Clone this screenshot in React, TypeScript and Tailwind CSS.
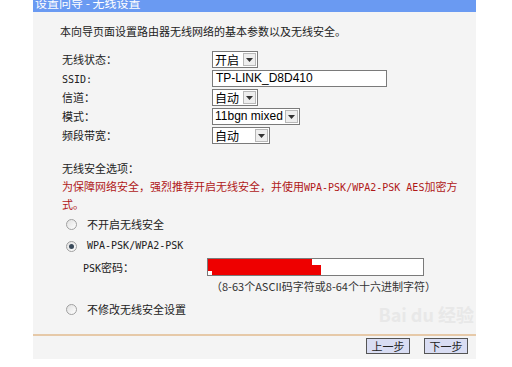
import React from "react";

const font = { fontFamily: '"Noto Sans CJK SC", "DejaVu Sans", sans-serif' };
const mono = { fontFamily: '"DejaVu Sans Mono", "Liberation Mono", monospace' };
const arial = { fontFamily: '"Liberation Sans", Arial, sans-serif' };

const Select = ({ value, width }: { value: string; width: string }) => (
  <div className={`flex h-[17px] items-stretch border border-[#7a7a7a] bg-white ${width}`}>
    <span
      className="min-w-0 flex-1 overflow-hidden whitespace-nowrap px-[2px] text-[12px] leading-[15px] text-black"
      style={/^[0-9a-z ]+$/i.test(value) ? arial : undefined}
    >
      {value}
    </span>
    <span className="m-[1px] flex w-[13px] shrink-0 items-center justify-center border border-[#b8b8b8] bg-[#eeeeee]">
      <svg width="7" height="4" viewBox="0 0 7 4">
        <path d="M0 0h7L3.5 4z" fill="#333" />
      </svg>
    </span>
  </div>
);

const Radio = ({ checked }: { checked?: boolean }) => (
  <span className="flex h-[11px] w-[11px] items-center justify-center rounded-full border border-[#a0a0a0] bg-gradient-to-br from-[#e0e0e0] to-[#ffffff]">
    {checked && <span className="h-[5px] w-[5px] rounded-full bg-[#3a4a5a]" />}
  </span>
);

const Row = ({ label, children }: { label: React.ReactNode; children: React.ReactNode }) => (
  <div className="flex h-[19px] items-center">
    <span className="w-[150px] text-[11px] text-[#222]">{label}</span>
    {children}
  </div>
);

export default function App() {
  return (
    <div className="h-[367px] w-[512px] overflow-hidden bg-white" style={font}>
      <div className="relative ml-[33px] flex h-[359px] w-[443px] flex-col bg-[#f4f4f4]">
        <div className="h-[12px] overflow-hidden bg-[#6a9af2]">
          <div className="-mt-[5px] pl-[2px] text-[12px] leading-[16px] text-white">设置向导 - 无线设置</div>
        </div>
        <div className="pl-[27px] pt-[11px] text-[11px] leading-[16px] text-[#222]">
          本向导页面设置路由器无线网络的基本参数以及无线安全。
        </div>
        <div className="flex flex-col pl-[29px] pt-[11px]">
          <Row label="无线状态：">
            <Select value="开启" width="w-[46px]" />
          </Row>
          <Row label={<span className="text-[10px]" style={mono}>SSID:</span>}>
            <div
              className="h-[17px] w-[175px] border border-[#7a7a7a] bg-white px-[3px] text-[12px] leading-[15px] text-black"
              style={arial}
            >
              TP-LINK_D8D410
            </div>
          </Row>
          <Row label="信道：">
            <Select value="自动" width="w-[46px]" />
          </Row>
          <Row label="模式：">
            <Select value="11bgn mixed" width="w-[88px]" />
          </Row>
          <Row label="频段带宽：">
            <Select value="自动" width="w-[58px]" />
          </Row>
        </div>
        <div className="pl-[29px] pt-[14px] text-[11px] leading-[18px] text-[#222]">无线安全选项：</div>
        <div className="whitespace-nowrap pl-[29px] text-[11px] leading-[18px] text-[#b01818]">
          为保障网络安全，强烈推荐开启无线安全，并使用
          <span className="text-[10px] leading-none" style={mono}>
            WPA-PSK/WPA2-PSK AES
          </span>
          加密方
          <br />
          式。
        </div>
        <div className="flex items-center gap-[10px] pl-[33px] pt-[1px] text-[11px] leading-[20px] text-[#222]">
          <Radio />
          <span>不开启无线安全</span>
        </div>
        <div className="flex items-center gap-[10px] pl-[33px] pt-[2px] text-[11px] leading-[20px] text-[#222]">
          <Radio checked />
          <span className="text-[10px]" style={mono}>
            WPA-PSK/WPA2-PSK
          </span>
        </div>
        <div className="flex items-center pl-[50px] pt-[2px]">
          <span className="w-[124px] text-[11px] text-[#222]">
            <span className="text-[10px]" style={mono}>PSK</span>密码：
          </span>
          <div className="relative h-[18px] w-[217px] border border-[#7a7a7a] bg-white">
            <div className="absolute left-0 top-0 h-[12px] w-[104px] bg-[#ee0000]" />
            <div className="absolute left-[4px] top-[6px] h-[10px] w-[109px] bg-[#ee0000]" />
          </div>
        </div>
        <div className="pl-[178px] pt-[2px] text-[11px] leading-[16px] text-[#333]">
          （8-63个ASCII码字符或8-64个十六进制字符）
        </div>
        <div className="flex items-center gap-[10px] pl-[33px] pt-[5px] text-[11px] leading-[20px] text-[#222]">
          <Radio />
          <span>不修改无线安全设置</span>
        </div>
        <div className="mt-[15px] h-[2px] bg-[#e6c9a8]" />
        <div className="flex justify-end gap-[14px] pr-[8px] pt-[2px]">
          <button className="h-[16px] w-[44px] border border-[#555] bg-[#d9ddf3] text-[11px] leading-[14px] text-[#222]">
            上一步
          </button>
          <button className="h-[16px] w-[44px] border border-[#555] bg-[#d9ddf3] text-[11px] leading-[14px] text-[#222]">
            下一步
          </button>
        </div>
        <div className="pointer-events-none absolute right-[2px] top-[302px] text-[18px] font-bold leading-[24px] text-[#e8e8e8]">
          Bai du 经验
        </div>
      </div>
    </div>
  );
}
